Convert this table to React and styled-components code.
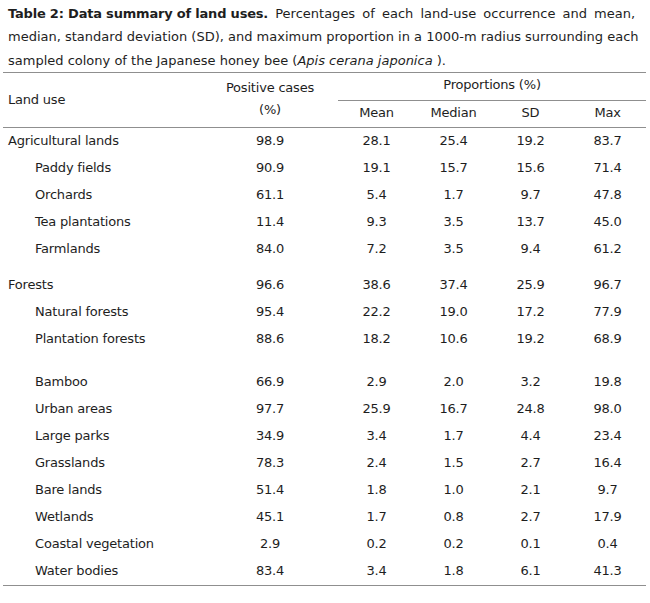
import React from 'react';
import styled, { createGlobalStyle } from 'styled-components';

const GlobalStyle = createGlobalStyle`
  body {
    margin: 0;
    background: #ffffff;
    color: #1e1e1e;
    font-family: "DejaVu Sans", Verdana, sans-serif;
  }
`;

const Page = styled.div`
  width: 650px;
  padding: 2px 0 0 3px;
  box-sizing: border-box;
`;

const Caption = styled.p`
  margin: 0;
  padding: 0 0 0 5px;
  font-size: 13px;
  line-height: 23.4px;
  white-space: nowrap;
`;

const Lead = styled.b`
  letter-spacing: -0.2px;
`;

// first caption line runs a little wider in the original
const Spread = styled.span`
  word-spacing: 3px;
`;

const Table = styled.table`
  width: 643px;
  border-collapse: collapse;
  table-layout: fixed;
  font-size: 13px;
  letter-spacing: -0.2px;
  border-top: 1px solid #8f8f8f;
  border-bottom: 1px solid #8f8f8f;
`;

const Head = styled.thead`
  border-bottom: 1px solid #8f8f8f;
`;

// height here is the content height; $lift adds bottom padding on top of it
const Th = styled.th`
  font-weight: normal;
  text-align: ${(p) => (p.$left ? 'left' : 'center')};
  padding: 0 0 ${(p) => p.$lift || 0}px ${(p) => (p.$left ? '5px' : '0')};
  height: ${(p) => p.$h || 24}px;
  line-height: 22px;
  vertical-align: middle;
  border-bottom: ${(p) => (p.$rule ? '1px solid #8f8f8f' : 'none')};
`;

const Td = styled.td`
  height: 25px;
  padding: ${(p) => p.$gap || 0}px 0 2px ${(p) => (p.$indent ? '32px' : p.$label ? '5px' : '0')};
  text-align: ${(p) => (p.$label ? 'left' : 'center')};
  vertical-align: middle;
  line-height: 25px;
  white-space: nowrap;
`;

const rows = [
  ['Agricultural lands', false, '98.9', '28.1', '25.4', '19.2', '83.7'],
  ['Paddy fields', true, '90.9', '19.1', '15.7', '15.6', '71.4'],
  ['Orchards', true, '61.1', '5.4', '1.7', '9.7', '47.8'],
  ['Tea plantations', true, '11.4', '9.3', '3.5', '13.7', '45.0'],
  ['Farmlands', true, '84.0', '7.2', '3.5', '9.4', '61.2'],
  ['Forests', false, '96.6', '38.6', '37.4', '25.9', '96.7', 9],
  ['Natural forests', true, '95.4', '22.2', '19.0', '17.2', '77.9'],
  ['Plantation forests', true, '88.6', '18.2', '10.6', '19.2', '68.9'],
  ['Bamboo', true, '66.9', '2.9', '2.0', '3.2', '19.8', 16],
  ['Urban areas', true, '97.7', '25.9', '16.7', '24.8', '98.0'],
  ['Large parks', true, '34.9', '3.4', '1.7', '4.4', '23.4'],
  ['Grasslands', true, '78.3', '2.4', '1.5', '2.7', '16.4'],
  ['Bare lands', true, '51.4', '1.8', '1.0', '2.1', '9.7'],
  ['Wetlands', true, '45.1', '1.7', '0.8', '2.7', '17.9'],
  ['Coastal vegetation', true, '2.9', '0.2', '0.2', '0.1', '0.4'],
  ['Water bodies', true, '83.4', '3.4', '1.8', '6.1', '41.3'],
];

const App = () => (
  <Page>
    <GlobalStyle />
    <Caption>
      <Lead>Table 2: Data summary of land uses.</Lead>
      <Spread> Percentages of each land-use occurrence and mean,</Spread>
      <br />
      median, standard deviation (SD), and maximum proportion in a 1000-m radius surrounding each
      <br />
      sampled colony of the Japanese honey bee (<i>Apis cerana japonica</i> ).
    </Caption>
    <Table>
      <colgroup>
        <col style={{ width: 199 }} />
        <col style={{ width: 136 }} />
        <col style={{ width: 77 }} />
        <col style={{ width: 77 }} />
        <col style={{ width: 77 }} />
        <col style={{ width: 77 }} />
      </colgroup>
      <Head>
        <tr>
          <Th $left rowSpan={2}>Land use</Th>
          <Th rowSpan={2} $lift={2}>Positive cases<br />(%)</Th>
          <Th colSpan={4} $rule $lift={3}>Proportions (%)</Th>
        </tr>
        <tr>
          <Th $lift={2}>Mean</Th>
          <Th $lift={2}>Median</Th>
          <Th $lift={2}>SD</Th>
          <Th $lift={2}>Max</Th>
        </tr>
      </Head>
      <tbody>
        {rows.map(([name, indent, ...rest]) => {
          const gap = rest[5];
          return (
            <tr key={name}>
              <Td $label $indent={indent} $gap={gap}>{name}</Td>
              {rest.slice(0, 5).map((v, i) => (
                <Td key={i} $gap={gap}>{v}</Td>
              ))}
            </tr>
          );
        })}
      </tbody>
    </Table>
  </Page>
);

export default App;
